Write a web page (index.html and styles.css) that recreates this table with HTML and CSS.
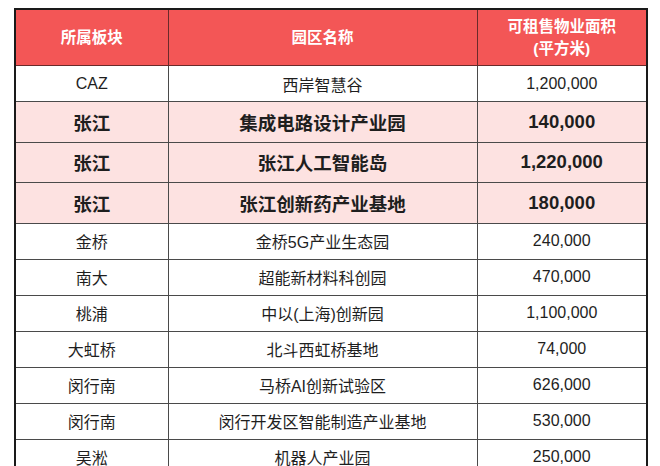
FILE: index.html
```html
<!DOCTYPE html>
<html lang="zh-CN">
<head>
<meta charset="utf-8">
<title>可租售物业面积</title>
<link rel="stylesheet" href="styles.css">
</head>
<body>
<table class="parks">
  <colgroup>
    <col class="c1"><col class="c2"><col class="c3">
  </colgroup>
  <thead>
    <tr class="head">
      <th>所属板块</th>
      <th>园区名称</th>
      <th>可租售物业面积<br>(平方米)</th>
    </tr>
  </thead>
  <tbody>
    <tr class="r-first"><td>CAZ</td><td>西岸智慧谷</td><td>1,200,000</td></tr>
    <tr class="hl"><td>张江</td><td>集成电路设计产业园</td><td>140,000</td></tr>
    <tr class="hl"><td>张江</td><td>张江人工智能岛</td><td>1,220,000</td></tr>
    <tr class="hl hl-last"><td>张江</td><td>张江创新药产业基地</td><td>180,000</td></tr>
    <tr class="r"><td>金桥</td><td>金桥5G产业生态园</td><td>240,000</td></tr>
    <tr class="r"><td>南大</td><td>超能新材料科创园</td><td>470,000</td></tr>
    <tr class="r"><td>桃浦</td><td>中以(上海)创新园</td><td>1,100,000</td></tr>
    <tr class="r"><td>大虹桥</td><td>北斗西虹桥基地</td><td>74,000</td></tr>
    <tr class="r"><td>闵行南</td><td>马桥AI创新试验区</td><td>626,000</td></tr>
    <tr class="r"><td>闵行南</td><td>闵行开发区智能制造产业基地</td><td>530,000</td></tr>
    <tr class="r"><td>吴淞</td><td>机器人产业园</td><td>250,000</td></tr>
  </tbody>
</table>
</body>
</html>
```

FILE: styles.css
```css
html, body {
  margin: 0;
  padding: 0;
  background: #ffffff;
  overflow: hidden;
}

body {
  padding: 8px 0 0 14px;
  font-family: "Liberation Sans", "Noto Sans CJK SC", sans-serif;
  color: #1e1e1e;
}

.parks {
  border-collapse: collapse;
  table-layout: fixed;
  width: 632px;
  border: 2px solid #1a1a1a;
}

.c1 { width: 153px; }
.c2 { width: 309px; }
.c3 { width: 170px; }

.parks th,
.parks td {
  border: 1px solid #4a4a4a;
  text-align: center;
  vertical-align: middle;
  padding: 0;
}

.head th {
  background: #f35656;
  color: #ffffff;
  font-weight: bold;
  font-size: 15.5px;
  line-height: 22px;
  height: 55px;
  border-color: #6a2a2a;
}

.r-first td {
  height: 35px;
  font-size: 16px;
}

.hl td {
  background: #fde2e1;
  font-weight: bold;
  font-size: 18.5px;
  height: 39.5px;
}

.r td {
  height: 35px;
  font-size: 16px;
}
```
